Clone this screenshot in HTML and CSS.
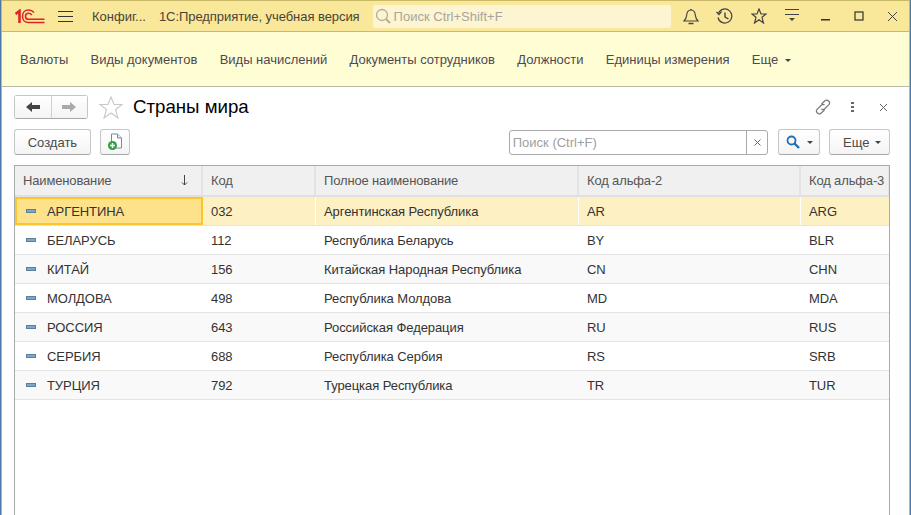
FILE: index.html
```html
<!DOCTYPE html>
<html lang="ru">
  <head>
    <meta charset="UTF-8" />
    <title>Страны мира</title>
    <link rel="stylesheet" href="styles.css">
  </head>
  <body>
    <div class="window">
      <div class="titlebar">
        <svg class="logo" width="30" height="15" viewBox="0 0 30 15" fill="none" stroke="#e0232a">
          <path d="M.5 5 4.500 2V14" stroke-width="2.600"/>
          <path d="M19 3.500C17.500 1.800 15.500 1 13.500 1 9.800 1 7.500 3.800 7.500 7.200S9.800 13.500 13.500 13.500H29.500" stroke-width="1.600"/>
          <path d="M16.800 6C16 4.900 14.800 4.200 13.500 4.200 11.700 4.200 10.500 5.500 10.500 7.200S11.700 10.300 13.500 10.300H29.500" stroke-width="1.600"/>
        </svg>
        <div class="burger"><span></span><span></span><span></span></div>
        <span class="app-name">Конфиг...</span>
        <span class="app-title">1С:Предприятие, учебная версия</span>
        <div class="global-search">
          <svg width="17" height="17" viewBox="0 0 17 17" fill="none" stroke="#b3ad98" stroke-width="1.300">
            <circle cx="7" cy="7" r="5.500"/>
            <path d="M11 11 15 15" stroke-width="2"/>
          </svg>
          <span>Поиск Ctrl+Shift+F</span>
        </div>
        <div class="title-icons">
          <svg width="16" height="17" viewBox="0 0 16 17" fill="none" stroke="#444" stroke-width="1.200">
            <path d="M1 13H15C13 11 12.600 10 12.400 7.500 12.100 4 10.500 2 8 2S3.900 4 3.600 7.500C3.400 10 3 11 1 13Z"/>
            <path d="M8 1V2M5.500 15.500H10.500" stroke-width="1.600"/>
          </svg>
          <svg width="18" height="17" viewBox="0 0 18 17" fill="none" stroke="#444" stroke-width="1.200">
            <path d="M2.500 5A7 7 0 1 1 2 9.500"/>
            <path d="M.5 4 3 6.500 5.500 3.500"/>
            <path d="M9 4.500V9L12.500 11" stroke-width="1.400"/>
          </svg>
          <svg width="16" height="16" viewBox="0 0 16 16" fill="none" stroke="#444" stroke-width="1.200">
            <path d="M8 1 10 6H15L11 9.300 12.500 15 8 11.700 3.500 15 5 9.300 1 6H6Z"/>
          </svg>
          <svg width="16" height="14" viewBox="0 0 16 14" fill="#444">
            <rect x="1" y="0" width="14" height="1"/>
            <rect x="1" y="5" width="14" height="1"/>
            <path d="M5 9H11L8 12Z"/>
          </svg>
        </div>
        <div class="window-btns">
          <svg width="10" height="10" viewBox="0 0 10 10" fill="#333"><rect x="0" y="8" width="9" height="1.500"/></svg>
          <svg width="10" height="10" viewBox="0 0 10 10" fill="none" stroke="#333" stroke-width="1.200"><rect x="1" y="1" width="8" height="8"/></svg>
          <svg width="11" height="11" viewBox="0 0 11 11" fill="none" stroke="#444" stroke-width="1"><path d="M1 1 10 10M10 1 1 10"/></svg>
        </div>
      </div>

      <div class="sections">
        <a>Валюты</a>
        <a>Виды документов</a>
        <a>Виды начислений</a>
        <a>Документы сотрудников</a>
        <a>Должности</a>
        <a>Единицы измерения</a>
        <a>Еще <i class="caret"></i></a>
      </div>

      <div class="content">
        <div class="form-head">
          <div class="nav-btns">
            <button class="nav-btn">
              <svg width="14" height="10" viewBox="0 0 14 10" fill="#444"><path d="M0 5 6 0V3H14V7H6V10Z"/></svg>
            </button>
            <button class="nav-btn">
              <svg width="14" height="10" viewBox="0 0 14 10" fill="#aaa"><path d="M14 5 8 0V3H0V7H8V10Z"/></svg>
            </button>
          </div>
          <svg class="fav" width="24" height="23" viewBox="0 0 24 23" fill="#fff" stroke="#c9c9c9" stroke-width="1.100">
            <path d="M12 1 15 8.500H23L16.500 13.500 19 22 12 17 5 22 7.500 13.500 1 8.500H9Z"/>
          </svg>
          <h1>Страны мира</h1>
          <div class="head-icons">
            <svg width="16" height="16" viewBox="0 0 16 16" fill="none" stroke="#777" stroke-width="1.200">
              <path d="M6.500 5 10 1.800C11 .9 12.600 1 13.600 2S14.800 4.600 13.900 5.600L9.500 10C8.500 10.900 7.400 10.800 6.500 10"/>
              <path d="M9.500 11 6 14.200C5 15.100 3.400 15 2.400 14S1.200 11.400 2.100 10.400L6.500 6C7.500 5.100 8.600 5.200 9.500 6"/>
            </svg>
            <div class="dots"><span></span><span></span><span></span></div>
            <svg width="9" height="9" viewBox="0 0 9 9" fill="none" stroke="#666" stroke-width="1"><path d="M1 1 8 8M8 1 1 8"/></svg>
          </div>
        </div>

        <div class="toolbar">
          <button class="btn btn-create">Создать</button>
          <button class="btn btn-icon">
            <svg width="16" height="18" viewBox="0 0 16 18">
              <path d="M4.500 1H10.500L14.500 5V15H4.500Z" fill="#fff" stroke="#7b8a99"/>
              <path d="M10.500 1V5H14.500" fill="#dfe6ec" stroke="#7b8a99"/>
              <circle cx="5.500" cy="12.500" r="4.500" fill="#2f9e44"/>
              <path d="M3 12.500H8M5.500 10V15" stroke="#fff" stroke-width="1.500"/>
            </svg>
          </button>
          <div class="search">
            <span class="search-text">Поиск (Ctrl+F)</span>
            <span class="search-clear">
              <svg width="7" height="7" viewBox="0 0 7 7" fill="none" stroke="#666" stroke-width="1"><path d="M.5 .5 6.500 6.500M6.500 .5 .5 6.500"/></svg>
            </span>
          </div>
          <button class="btn btn-find">
            <svg width="14" height="14" viewBox="0 0 14 14" fill="none" stroke="#1f6fb2" stroke-width="1.800">
              <circle cx="5.500" cy="5.500" r="4"/>
              <path d="M8.500 8.500 13 13" stroke-width="2.400"/>
            </svg>
            <i class="caret"></i>
          </button>
          <button class="btn btn-more">Еще <i class="caret"></i></button>
        </div>

        <div class="grid">
          <div class="grid-row grid-header">
            <div class="cell cell-name">Наименование
              <svg class="sort" width="7" height="11" viewBox="0 0 7 11" fill="none" stroke="#444"><path d="M3.500 0V10M1 7.500 3.500 10 6 7.500"/></svg>
            </div>
            <div class="cell">Код</div>
            <div class="cell">Полное наименование</div>
            <div class="cell">Код альфа-2</div>
            <div class="cell">Код альфа-3</div>
          </div>
          <div class="grid-row selected">
            <div class="cell cell-name active"><i class="marker"></i>АРГЕНТИНА</div>
            <div class="cell">032</div>
            <div class="cell">Аргентинская Республика</div>
            <div class="cell">AR</div>
            <div class="cell">ARG</div>
          </div>
          <div class="grid-row">
            <div class="cell cell-name"><i class="marker"></i>БЕЛАРУСЬ</div>
            <div class="cell">112</div>
            <div class="cell">Республика Беларусь</div>
            <div class="cell">BY</div>
            <div class="cell">BLR</div>
          </div>
          <div class="grid-row">
            <div class="cell cell-name"><i class="marker"></i>КИТАЙ</div>
            <div class="cell">156</div>
            <div class="cell">Китайская Народная Республика</div>
            <div class="cell">CN</div>
            <div class="cell">CHN</div>
          </div>
          <div class="grid-row">
            <div class="cell cell-name"><i class="marker"></i>МОЛДОВА</div>
            <div class="cell">498</div>
            <div class="cell">Республика Молдова</div>
            <div class="cell">MD</div>
            <div class="cell">MDA</div>
          </div>
          <div class="grid-row">
            <div class="cell cell-name"><i class="marker"></i>РОССИЯ</div>
            <div class="cell">643</div>
            <div class="cell">Российская Федерация</div>
            <div class="cell">RU</div>
            <div class="cell">RUS</div>
          </div>
          <div class="grid-row">
            <div class="cell cell-name"><i class="marker"></i>СЕРБИЯ</div>
            <div class="cell">688</div>
            <div class="cell">Республика Сербия</div>
            <div class="cell">RS</div>
            <div class="cell">SRB</div>
          </div>
          <div class="grid-row">
            <div class="cell cell-name"><i class="marker"></i>ТУРЦИЯ</div>
            <div class="cell">792</div>
            <div class="cell">Турецкая Республика</div>
            <div class="cell">TR</div>
            <div class="cell">TUR</div>
          </div>
        </div>
      </div>
    </div>
  </body>
</html>
```

FILE: styles.css
```css
html,
body {
  margin: 0;
  height: 100%;
  overflow: hidden;
}

body {
  font-family: "Liberation Sans", Arial, sans-serif;
  font-size: 13px;
  color: #333;
  background: #4a78a8;
}

svg {
  display: block;
  flex: none;
}

.window {
  box-sizing: border-box;
  width: 909px;
  height: 515px;
  margin-left: 1px;
  border-top: 1px solid #c9b96a;
  border-left: 1px solid #c9b96a;
  border-right: 1px solid #c9b96a;
  background: #fff;
  display: flex;
  flex-direction: column;
}

/* title bar */
.titlebar {
  height: 31px;
  flex: none;
  box-sizing: border-box;
  background: #f9e79a;
  border-bottom: 1px solid #c9b96a;
  display: flex;
  align-items: center;
  padding-left: 13px;
  color: #4a4436;
}

.burger {
  margin-left: 13px;
  width: 15px;
  display: flex;
  flex-direction: column;
  gap: 4px;
}

.burger span {
  height: 1px;
  background: #333;
}

.app-name {
  margin-left: 19px;
}

.app-title {
  margin-left: 13px;
  letter-spacing: -0.06px;
}

.global-search {
  margin-left: 13px;
  width: 298px;
  height: 23px;
  box-sizing: border-box;
  background: #fdf4d2;
  border-radius: 2px;
  display: flex;
  align-items: center;
  gap: 2px;
  padding-left: 2px;
  color: #a8a59a;
}

.title-icons {
  margin-left: 12px;
  display: flex;
  align-items: center;
  gap: 17px;
}

.window-btns {
  margin-left: 21px;
  display: flex;
  align-items: center;
  gap: 23px;
}

/* sections panel */
.sections {
  height: 55px;
  flex: none;
  box-sizing: border-box;
  background: #fffdd4;
  border-bottom: 1px solid #b9b9a8;
  display: flex;
  align-items: center;
  gap: 22.3px;
  padding-left: 18px;
  color: #4f4a52;
}

.caret {
  display: inline-block;
  width: 0;
  height: 0;
  margin-left: 3px;
  vertical-align: 2px;
  border-left: 3px solid transparent;
  border-right: 3px solid transparent;
  border-top: 3px solid #444;
}

/* form */
.content {
  flex: 1;
  min-height: 0;
  display: flex;
  flex-direction: column;
  padding: 7px 19px 0 12px;
}

.form-head {
  height: 26px;
  flex: none;
  display: flex;
  align-items: center;
}

.nav-btns {
  display: flex;
  width: 74px;
  height: 24px;
  box-sizing: border-box;
  border: 1px solid #c6c6c6;
  border-bottom-color: #a8a8a8;
  border-radius: 3px;
}

.nav-btn {
  flex: 1;
  padding: 0;
  border: 0;
  background: linear-gradient(#fff, #f4f4f4);
  display: flex;
  align-items: center;
  justify-content: center;
}

.nav-btn + .nav-btn {
  border-left: 1px solid #d0d0d0;
}

.fav {
  margin-left: 11px;
}

h1 {
  margin: 0 0 0 10px;
  font-size: 18.67px;
  font-weight: 400;
  color: #000;
}

.head-icons {
  margin-left: auto;
  display: flex;
  align-items: center;
}

.dots {
  margin-left: 20px;
  display: flex;
  flex-direction: column;
  gap: 2px;
}

.dots span {
  width: 3px;
  height: 2px;
  background: #666;
}

.head-icons > svg:last-child {
  margin-left: 25px;
  margin-right: 2px;
}

.toolbar {
  margin-top: 9px;
  flex: none;
  display: flex;
  align-items: center;
  height: 26px;
}

.btn {
  height: 26px;
  box-sizing: border-box;
  border: 1px solid #c6c6c6;
  border-bottom-color: #a8a8a8;
  border-radius: 3px;
  background: linear-gradient(#fff, #f4f4f4);
  font: inherit;
  color: #4a4a4a;
  padding: 0;
  display: flex;
  align-items: center;
  justify-content: center;
}

.btn-create {
  width: 77px;
}

.btn-icon {
  width: 30px;
  margin-left: 9px;
}

.search {
  margin-left: 379px;
  width: 260px;
  height: 25px;
  box-sizing: border-box;
  border: 1px solid #aaa;
  border-radius: 3px;
  display: flex;
  align-items: center;
}

.search-text {
  flex: 1;
  padding-left: 3px;
  color: #a0a0a0;
}

.search-clear {
  width: 20px;
  height: 100%;
  border-left: 1px solid #aaa;
  display: flex;
  align-items: center;
  justify-content: center;
}

.btn-find {
  width: 42px;
  margin-left: 10px;
  gap: 4px;
}

.btn-more {
  width: 61px;
  margin-left: 9px;
  padding-left: 13px;
  justify-content: flex-start;
  gap: 5px;
}

.btn-more .caret {
  margin-left: 0;
}

/* table */
.grid {
  margin-top: 10px;
  flex: 1;
  min-height: 0;
  border: 1px solid #aaa;
  border-bottom: 0;
  overflow: hidden;
}

.grid-row {
  display: grid;
  grid-template-columns: 188px 113px 263px 222px 89px;
  height: 28px;
  border-bottom: 1px solid #e3e3e3;
  color: #333;
  letter-spacing: -0.07px;
}

.grid-row:nth-child(even) {
  background: #f9f9f9;
}

.grid-row.grid-header {
  height: 29px;
  background: #f0f0f0;
  border-bottom: 2px solid #e0e0e0;
  color: #555;
  letter-spacing: -0.15px;
}

.grid-row.selected {
  background: #fdf0c3;
}

.cell {
  box-sizing: border-box;
  display: flex;
  align-items: center;
  padding-left: 8px;
  white-space: nowrap;
  overflow: hidden;
}

.selected .cell {
  border-right: 1px solid #fff;
}

.grid-header .cell {
  border-right: 2px solid #e3e3e3;
}

.sort {
  margin-left: auto;
  margin-right: 13px;
}

.marker {
  width: 10px;
  height: 4px;
  box-sizing: border-box;
  margin: 0 11px 0 3px;
  background: #7fa7cb;
  border: 1px solid #5a7f9f;
}

.selected .active {
  background: #fde28b;
  border: 2px solid #fbc62d;
  padding-left: 6px;
}
```
